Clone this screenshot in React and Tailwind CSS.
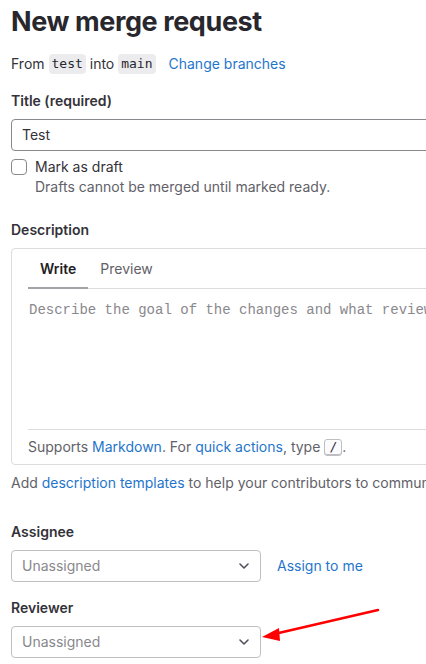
import React from 'react';

const sans = { fontFamily: 'Inter, "Noto Sans", sans-serif' };

function Chevron() {
  return (
    <svg width="10" height="6" viewBox="0 0 10 6" fill="none" className="text-[#535158]">
      <path d="M1 1l4 4 4-4" stroke="currentColor" strokeWidth="1.6" strokeLinecap="round" strokeLinejoin="round" />
    </svg>
  );
}

function Select() {
  return (
    <div className="w-[250px] h-[32px] border border-[#bfbfc3] rounded-[4px] flex items-center justify-between pl-[10px] pr-[11px] bg-white">
      <span className="text-[#89888d]">Unassigned</span>
      <Chevron />
    </div>
  );
}

function Code({ children }) {
  return (
    <code className="inline-flex items-center h-[20px] px-[3px] rounded-[4px] bg-[#ececef] text-[#28272d] text-[13px] font-['DejaVu_Sans_Mono',monospace]">
      {children}
    </code>
  );
}

export default function App() {
  return (
    <div className="relative w-[426px] h-[664px] overflow-hidden bg-white text-[14px] leading-5 text-[#333238]" style={sans}>
      <div className="w-[720px] pl-[11px]">
        {/* header */}
        <h1 className="mt-[4px] text-[27px] leading-[35px] font-bold text-[#28272d] tracking-[-0.4px]">New merge request</h1>
        <div className="mt-[15px] flex items-center h-[20px] whitespace-pre">
          <span>From </span>
          <Code>test</Code>
          <span> into </span>
          <Code>main</Code>
          <a className="ml-[13px] text-[#1f75cb]">Change branches</a>
        </div>

        {/* title */}
        <div className="mt-[17px] font-semibold">Title (required)</div>
        <div className="mt-[8px] h-[32px] border border-[#89888d] rounded-[4px] flex items-center px-[10px]">Test</div>
        <div className="mt-[6px] flex gap-[8px]">
          <div className="mt-[2px] w-[16px] h-[16px] border border-[#89888d] rounded-[4px] bg-white" />
          <div>
            <div>Mark as draft</div>
            <div className="text-[#626168]">Drafts cannot be merged until marked ready.</div>
          </div>
        </div>

        {/* description */}
        <div className="mt-[23px] font-semibold">Description</div>
        <div className="mt-[8px] border border-[#dcdcde] rounded-[4px]">
          <div className="mx-[16px] flex border-b border-[#dcdcde]">
            <div className="px-[12px] pt-[10px] pb-[8px] font-semibold text-[#1f1e24] border-b-2 border-[#a4a3a8] -mb-px">Write</div>
            <div className="px-[12px] pt-[10px] pb-[8px] text-[#626168]">Preview</div>
          </div>
          <div className="h-[140px] pl-[17px] pt-[11px] font-['Liberation_Mono',monospace] text-[14px] text-[#89888d] whitespace-nowrap">
            Describe the goal of the changes and what reviewers should be aware of.
          </div>
          <div className="mx-[16px] border-t border-[#dcdcde] pt-[7px] pb-[7px] text-[#626168] flex items-center whitespace-pre">
            <span>Supports </span>
            <a className="text-[#1f75cb]">Markdown</a>
            <span>. For </span>
            <a className="text-[#1f75cb]">quick actions</a>
            <span>, type </span>
            <kbd className="inline-flex items-center justify-center w-[18px] h-[17px] border border-[#bfbfc3] rounded-[3px] bg-[#fbfafd] shadow-[inset_0_-1px_0_#bfbfc3] text-[13px] text-[#333238] font-['DejaVu_Sans_Mono',monospace]">/</kbd>
            <span>.</span>
          </div>
        </div>
        <div className="mt-[8px] text-[#626168] whitespace-nowrap">
          Add <a className="text-[#1f75cb]">description templates</a> to help your contributors to communicate effectively!
        </div>

        {/* assignee */}
        <div className="mt-[29px] font-semibold">Assignee</div>
        <div className="mt-[8px] flex items-center gap-[16px]">
          <Select />
          <a className="text-[#1f75cb]">Assign to me</a>
        </div>

        {/* reviewer */}
        <div className="mt-[16px] font-semibold">Reviewer</div>
        <div className="mt-[8px]">
          <Select />
        </div>
      </div>

      {/* annotation arrow */}
      <svg className="absolute left-0 top-0 pointer-events-none" width="426" height="664">
        <line x1="378" y1="610" x2="270" y2="635" stroke="#ff0000" strokeWidth="2.5" strokeLinecap="round" />
        <path d="M262 637 L279 628 L280 641 Z" fill="#ff0000" />
      </svg>
    </div>
  );
}
